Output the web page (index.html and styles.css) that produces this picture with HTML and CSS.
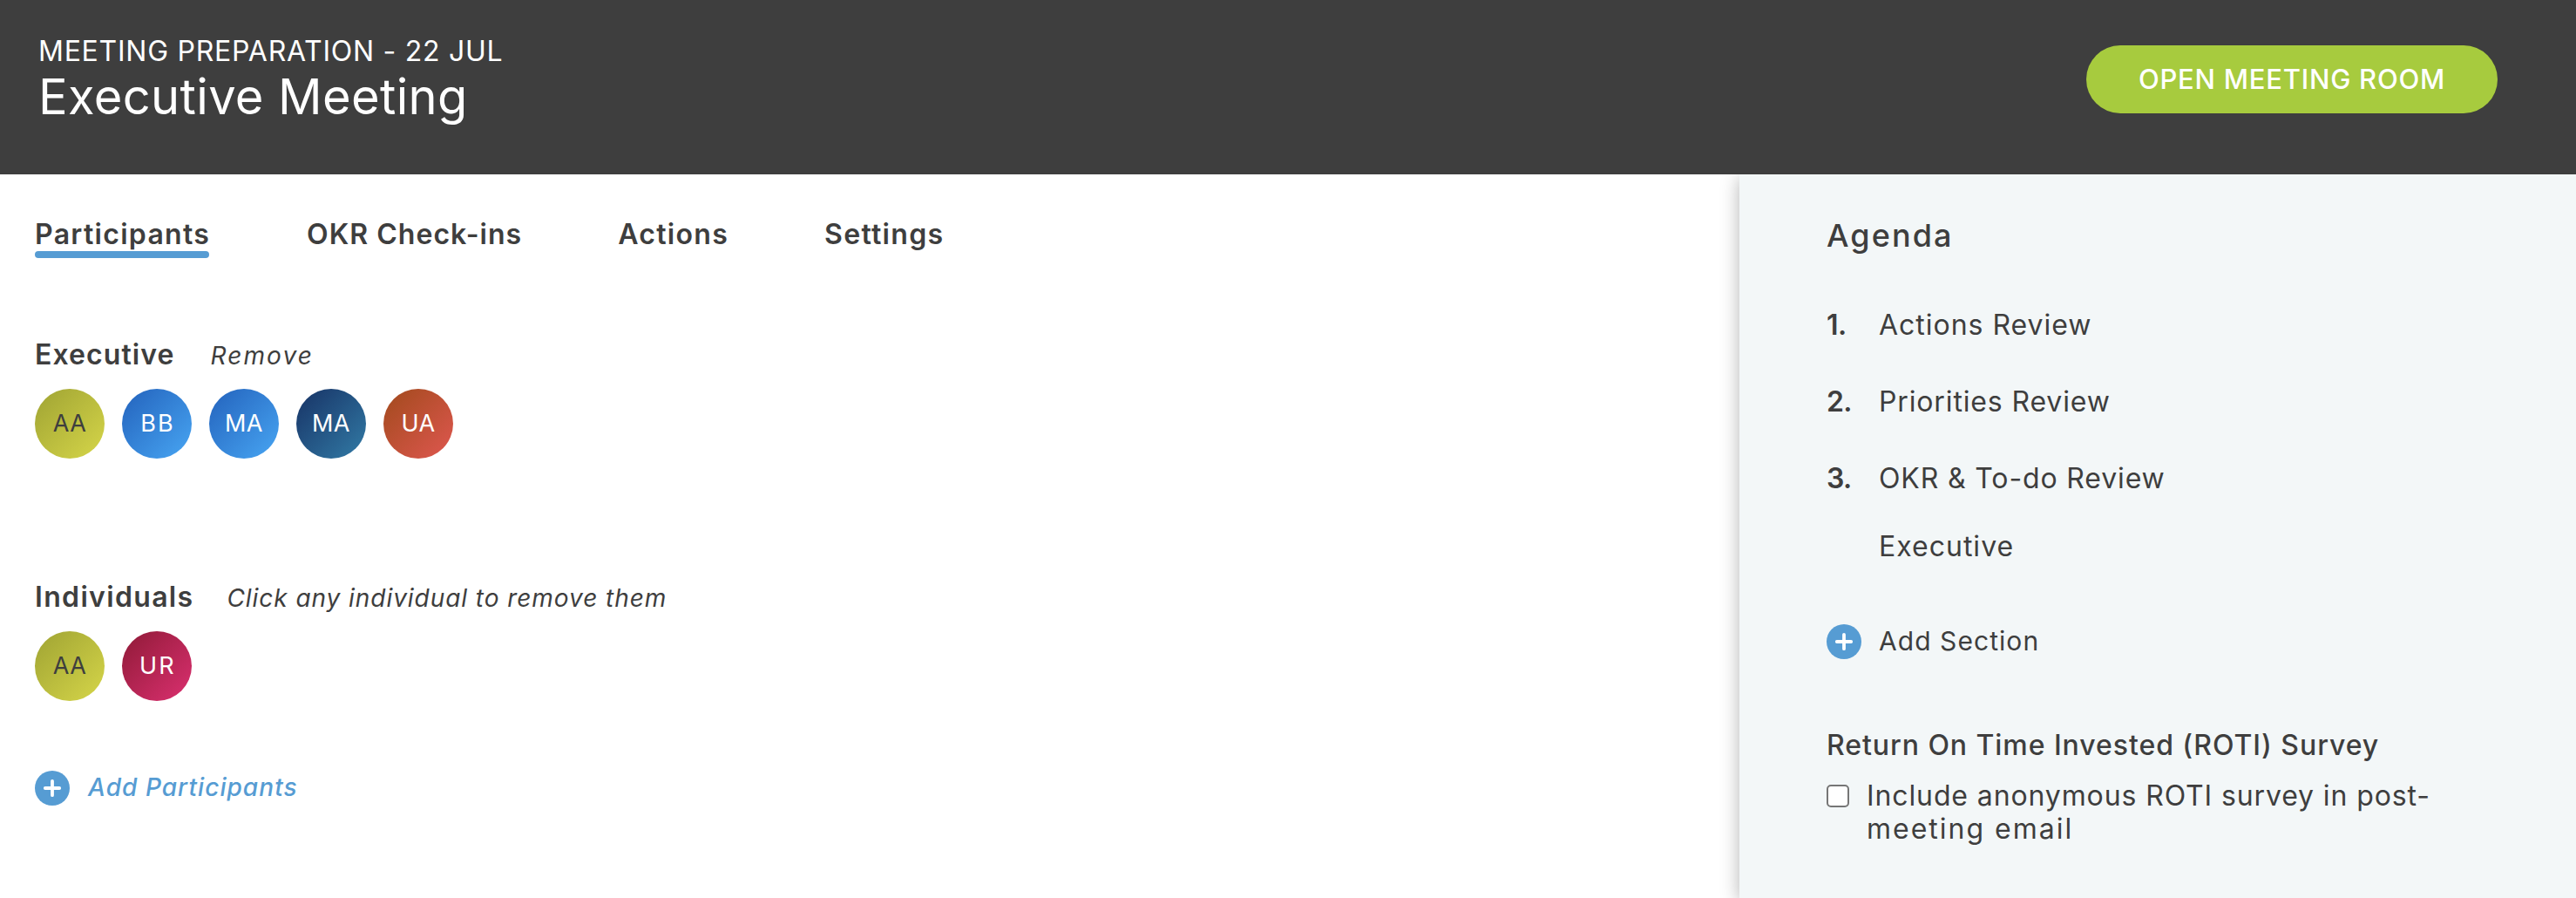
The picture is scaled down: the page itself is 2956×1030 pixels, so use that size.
FILE: index.html
```html
<!DOCTYPE html>
<html lang="en">
<head>
<meta charset="utf-8">
<title>Executive Meeting</title>
<link rel="stylesheet" href="styles.css">
</head>
<body>
<header class="header">
  <div>
    <div class="header-label">MEETING PREPARATION - 22 JUL</div>
    <h1 class="header-title">Executive Meeting</h1>
  </div>
  <button class="open-room">OPEN MEETING ROOM</button>
</header>
<div class="layout">
  <main class="main">
    <nav class="tabs">
      <a class="tab tab-active">Participants</a>
      <a class="tab tab-okr">OKR Check-ins</a>
      <a class="tab">Actions</a>
      <a class="tab">Settings</a>
    </nav>
    <section class="group">
      <div class="group-head">
        <h2 class="group-title">Executive</h2>
        <a class="group-hint hint-remove">Remove</a>
      </div>
      <div class="avatars">
        <span class="avatar olive">AA</span>
        <span class="avatar blue wide">BB</span>
        <span class="avatar blue">MA</span>
        <span class="avatar navy">MA</span>
        <span class="avatar rust">UA</span>
      </div>
    </section>
    <section class="group group-individuals">
      <div class="group-head">
        <h2 class="group-title title-individuals">Individuals</h2>
        <span class="group-hint hint-click">Click any individual to remove them</span>
      </div>
      <div class="avatars">
        <span class="avatar olive">AA</span>
        <span class="avatar crimson wide">UR</span>
      </div>
    </section>
    <a class="add add-participants">
      <svg class="plus" viewBox="0 0 40 40"><circle cx="20" cy="20" r="20"/><path d="M20 11.8V28.2M11.8 20H28.2"/></svg>
      <span>Add Participants</span>
    </a>
  </main>
  <aside class="agenda">
    <h2 class="agenda-title">Agenda</h2>
    <ol class="items">
      <li class="item"><span class="num">1.</span><span class="item-actions">Actions Review</span></li>
      <li class="item"><span class="num">2.</span><span>Priorities Review</span></li>
      <li class="item"><span class="num">3.</span><span>OKR &amp; To-do Review</span></li>
    </ol>
    <div class="subitem">Executive</div>
    <a class="add add-section">
      <svg class="plus" viewBox="0 0 40 40"><circle cx="20" cy="20" r="20"/><path d="M20 11.8V28.2M11.8 20H28.2"/></svg>
      <span>Add Section</span>
    </a>
    <h3 class="survey-title">Return On Time Invested (ROTI) Survey</h3>
    <label class="survey">
      <input class="checkbox" type="checkbox">
      <span>Include anonymous ROTI survey in post-<br><span class="survey-end">meeting email</span></span>
    </label>
  </aside>
</div>
</body>
</html>
```
FILE: styles.css
```css
* { box-sizing: border-box; }
body {
  margin: 0;
  height: 1030px;
  display: flex;
  flex-direction: column;
  overflow: hidden;
  background: #fff;
  color: #3e3e3e;
  font: 32px/39px Inter, "Liberation Sans", sans-serif;
}
h1, h2, h3, ol { margin: 0; padding: 0; font-weight: inherit; }

.header {
  height: 200px;
  flex: none;
  display: flex;
  justify-content: space-between;
  align-items: flex-start;
  padding: 39px 90px 0 44px;
  background: #3e3e3e;
  color: #fff;
}
.header-label { letter-spacing: .74px; }
.header-title { font-size: 56px; line-height: 66px; letter-spacing: .36px; }
.open-room {
  width: 472px;
  height: 78px;
  margin-top: 13px;
  padding: 0;
  border: 0;
  border-radius: 39px;
  background: #a7cb3e;
  color: #fff;
  font: 500 31px/78px Inter, "Liberation Sans", sans-serif;
  letter-spacing: .76px;
}

.layout { flex: 1; display: flex; overflow: hidden; }
.main { flex: 1; padding: 49px 40px 0; }

.tabs { display: flex; gap: 110px; font-weight: 600; line-height: 39px; }
.tab { letter-spacing: 1.3px; white-space: nowrap; }
.tab-active { width: 200px; }
.tab-active::after {
  content: "";
  display: block;
  height: 8px;
  border-radius: 4px;
  background: #569cd3;
}
.tab-okr { margin-left: 2px; letter-spacing: 1.04px; }

.group { margin-top: 91px; }
.group-individuals { margin-top: 139px; }
.group-head { display: flex; align-items: baseline; height: 40px; margin-bottom: 19px; }
.group-title { font-size: 32px; font-weight: 600; letter-spacing: 1.07px; }
.title-individuals { letter-spacing: 1.33px; }
.group-hint { font-size: 28px; font-style: italic; }
.hint-remove { margin-left: 41px; letter-spacing: 2.1px; }
.hint-click { margin-left: 38px; letter-spacing: .94px; }

.avatars { display: flex; gap: 20px; }
.avatar {
  width: 80px;
  height: 80px;
  border-radius: 50%;
  color: #fff;
  font-size: 27px;
  line-height: 80px;
  text-align: center;
  letter-spacing: .4px;
}
.wide { letter-spacing: 2.2px; text-indent: 2px; }
.olive { color: #3e3e3e; background: linear-gradient(135deg, #9fa333, #d6d649); }
.blue { background: linear-gradient(135deg, #2362bc, #48a6f3); }
.navy { background: linear-gradient(135deg, #173265, #327ba6); }
.rust { background: linear-gradient(135deg, #a14a1c, #df5750); }
.crimson { background: linear-gradient(135deg, #8f1a37, #db3070); }

.add { display: flex; }
.plus { width: 40px; height: 40px; flex: none; }
.plus circle { fill: #569cd3; }
.plus path { fill: none; stroke: #fff; stroke-width: 3.8; stroke-linecap: round; }
.add-participants {
  gap: 21px;
  margin-top: 80px;
  color: #569cd3;
  font-size: 28px;
  font-weight: 500;
  font-style: italic;
  letter-spacing: 1.04px;
}

.agenda {
  width: 960px;
  padding: 49px 100px 0;
  background: #f3f7f8;
  box-shadow: 0 4px 20px rgba(0, 0, 0, .3);
}
.agenda-title { font-size: 36px; font-weight: 500; line-height: 43px; letter-spacing: 2.07px; }
.items {
  display: flex;
  flex-direction: column;
  gap: 49px;
  margin-top: 61px;
  list-style: none;
}
.item { display: flex; letter-spacing: .86px; }
.item-actions { letter-spacing: .98px; }
.num { width: 60px; font-weight: 600; letter-spacing: -.6px; }
.subitem { margin: 39px 0 0 60px; letter-spacing: 1.01px; }
.add-section { gap: 20px; margin-top: 70px; font-size: 30px; letter-spacing: 1.06px; }
.survey-title { margin-top: 79px; font-size: 32px; font-weight: 500; letter-spacing: .94px; white-space: nowrap; }
.survey { display: flex; margin-top: 20px; line-height: 38px; letter-spacing: .885px; white-space: nowrap; }
.survey-end { letter-spacing: 1.99px; }
.checkbox {
  appearance: none;
  flex: none;
  width: 26px;
  height: 26px;
  margin: 6px 20px 0 0;
  border: 2px solid #767676;
  border-radius: 5px;
  background: #fff;
}
```
